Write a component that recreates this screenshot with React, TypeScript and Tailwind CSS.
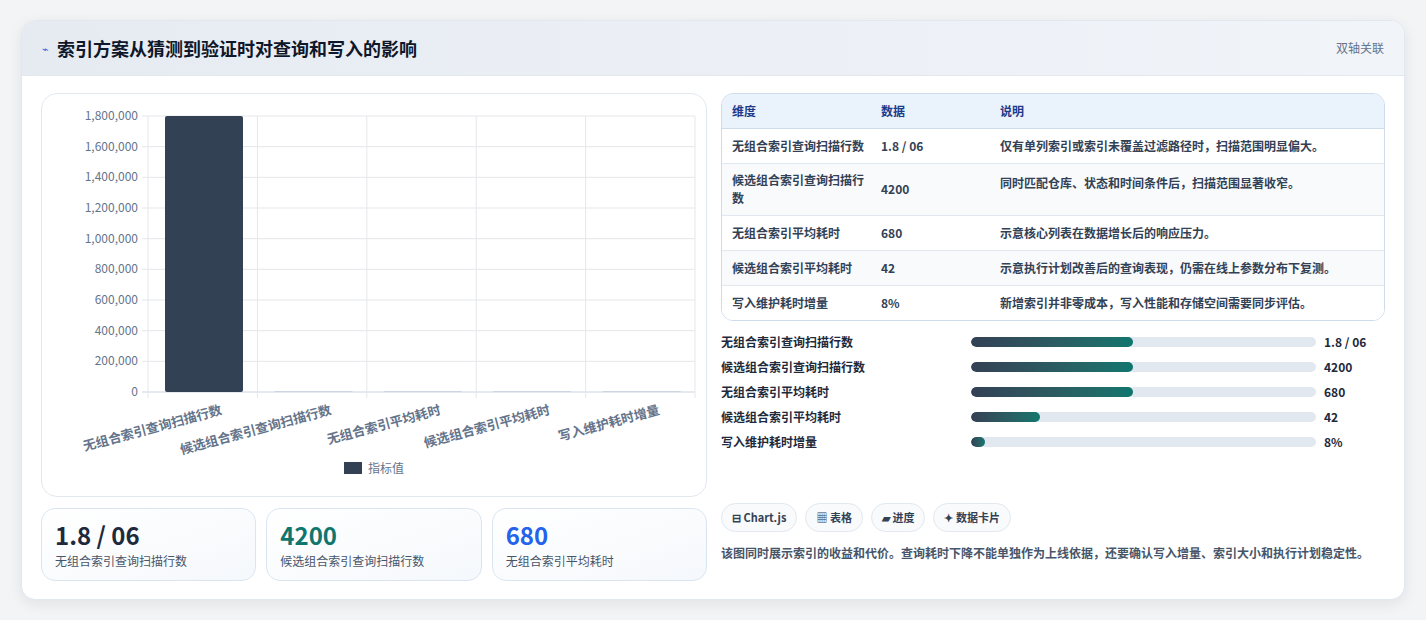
import React from 'react';

const FONT = { fontFamily: '"Noto Sans CJK SC", "Noto Sans", sans-serif' };

const rows = [
  { k: '无组合索引查询扫描行数', v: '1.8 / 06', d: '仅有单列索引或索引未覆盖过滤路径时，扫描范围明显偏大。' },
  { k: '候选组合索引查询扫描行数', v: '4200', d: '同时匹配仓库、状态和时间条件后，扫描范围显著收窄。' },
  { k: '无组合索引平均耗时', v: '680', d: '示意核心列表在数据增长后的响应压力。' },
  { k: '候选组合索引平均耗时', v: '42', d: '示意执行计划改善后的查询表现，仍需在线上参数分布下复测。' },
  { k: '写入维护耗时增量', v: '8%', d: '新增索引并非零成本，写入性能和存储空间需要同步评估。' },
];

const progress = [
  { k: '无组合索引查询扫描行数', v: '1.8 / 06', w: 47 },
  { k: '候选组合索引查询扫描行数', v: '4200', w: 47 },
  { k: '无组合索引平均耗时', v: '680', w: 47 },
  { k: '候选组合索引平均耗时', v: '42', w: 20 },
  { k: '写入维护耗时增量', v: '8%', w: 4 },
];

const ticks = ['1,800,000', '1,600,000', '1,400,000', '1,200,000', '1,000,000', '800,000', '600,000', '400,000', '200,000', '0'];
const cats = ['无组合索引查询扫描行数', '候选组合索引查询扫描行数', '无组合索引平均耗时', '候选组合索引平均耗时', '写入维护耗时增量'];

function Chart() {
  const x0 = 106, x1 = 653, y0 = 22, y1 = 298;
  const cw = (x1 - x0) / 5;
  const step = (y1 - y0) / 9;
  return (
    <svg width="664" height="400" style={FONT}>
      {ticks.map((t, i) => (
        <g key={t}>
          <line x1={x0 - 6} x2={x1} y1={y0 + i * step} y2={y0 + i * step} stroke={i === 9 ? '#cbd5e1' : '#e5e7eb'} />
          <text x={x0 - 10} y={y0 + i * step + 4} textAnchor="end" fontSize="12" fill="#64748b">{t}</text>
        </g>
      ))}
      {[0, 1, 2, 3, 4, 5].map(i => (
        <line key={i} x1={x0 + i * cw} x2={x0 + i * cw} y1={y0} y2={y1 + 6} stroke="#e5e7eb" />
      ))}
      <rect x={x0 + 17} y={y0} width={78} height={y1 - y0} rx="2" fill="#334155" />
      {[1, 2, 3, 4].map(i => (
        <rect key={i} x={x0 + i * cw + 17} y={y1 - 1} width={78} height={1} fill="#cbd5e1" />
      ))}
      {cats.map((c, i) => (
        <text key={c} x={x0 + i * cw + cw / 2 + 20} y={y1 + 22} textAnchor="end" fontSize="13" fontWeight="600" fill="#64748b"
          transform={`rotate(-15 ${x0 + i * cw + cw / 2 + 20} ${y1 + 22})`}>{c}</text>
      ))}
      <rect x={302} y={368} width={18} height={12} fill="#334155" />
      <text x={326} y={379} fontSize="12" fill="#64748b">指标值</text>
    </svg>
  );
}

export default function App() {
  return (
    <div className="min-h-screen bg-[#f3f4f6] px-[21px] pt-[20px]" style={FONT}>
      <div className="w-[1384px] h-[580px] bg-white rounded-[14px] border border-[#e2e8f0] shadow-[0_4px_14px_rgba(15,23,42,0.08)] overflow-hidden">
        <div className="h-[55px] flex items-center justify-between px-[20px] bg-gradient-to-r from-[#e6ebf2] to-[#f1f4f9] border-b border-[#e2e8f0]">
          <div className="flex items-center gap-[8px]">
            <span className="text-[#3b5bdb] text-[11px]">⌁</span>
            <span className="text-[18px] font-bold text-[#0f172a]">索引方案从猜测到验证时对查询和写入的影响</span>
          </div>
          <span className="text-[12px] text-[#64748b]">双轴关联</span>
        </div>
        <div className="flex gap-[14px] px-[19px] pt-[17px]">
          <div className="w-[666px] flex flex-col gap-[11px]">
            <div className="h-[404px] rounded-[16px] border border-[#e2e8f0] overflow-hidden">
              <Chart />
            </div>
            <div className="grid grid-cols-3 gap-[10px]">
              {[['1.8 / 06', '无组合索引查询扫描行数', 'text-[#1e293b]'], ['4200', '候选组合索引查询扫描行数', 'text-[#0f766e]'], ['680', '无组合索引平均耗时', 'text-[#2563eb]']].map(([v, l, c]) => (
                <div key={l} className="h-[73px] rounded-[14px] border border-[#dbe5f1] bg-gradient-to-br from-white to-[#f5f8fc] px-[13px] pt-[11px]">
                  <div className={`text-[24px] font-bold leading-[30px] ${c}`}>{v}</div>
                  <div className="text-[12px] text-[#475569] mt-[2px]">{l}</div>
                </div>
              ))}
            </div>
          </div>
          <div className="w-[667px] flex flex-col">
            <div className="rounded-[12px] border border-[#cfdcec] overflow-hidden">
              <table className="w-full text-[12px] text-[#334155] font-semibold">
                <thead>
                  <tr className="h-[34px] bg-[#eaf2fc] text-[#1e3a8a] border-b border-[#cfdcec] text-left">
                    <th className="pl-[10px] w-[159px] font-bold">维度</th>
                    <th className="w-[119px] font-bold">数据</th>
                    <th className="font-bold">说明</th>
                  </tr>
                </thead>
                <tbody>
                  {rows.map((r, i) => (
                    <tr key={r.k} className={`border-b border-[#e2e8f0] last:border-0 ${i === 1 ? 'h-[52px]' : 'h-[35px]'} ${i % 2 ? 'bg-[#f8fafc]' : 'bg-white'}`}>
                      <td className="pl-[10px] pr-[8px] leading-[18px]">{r.k}</td>
                      <td className="align-middle">{r.v}</td>
                      <td className={i === 1 ? 'align-top pt-[10px]' : ''}>{r.d}</td>
                    </tr>
                  ))}
                </tbody>
              </table>
            </div>
            <div className="mt-[12px] flex flex-col gap-[7px]">
              {progress.map(p => (
                <div key={p.k} className="flex items-center h-[18px] text-[12px] font-semibold text-[#1e293b]">
                  <span className="w-[250px]">{p.k}</span>
                  <div className="w-[345px] h-[10px] rounded-full bg-[#e2e8f0] overflow-hidden">
                    <div className="h-full rounded-full bg-gradient-to-r from-[#334155] to-[#0f766e]" style={{ width: `${p.w}%` }} />
                  </div>
                  <span className="ml-[8px] font-bold">{p.v}</span>
                </div>
              ))}
            </div>
            <div className="mt-[52px] flex gap-[8px]">
              {['⊟ Chart.js', '▦ 表格', '▰ 进度', '✦ 数据卡片'].map(t => (
                <span key={t} className="h-[29px] px-[10px] flex items-center rounded-full border border-[#e2e8f0] bg-[#f8fafc] text-[11px] font-semibold text-[#334155]">{t}</span>
              ))}
            </div>
            <p className="mt-[10px] text-[12px] leading-[22px] text-[#475569] font-semibold">该图同时展示索引的收益和代价。查询耗时下降不能单独作为上线依据，还要确认写入增量、索引大小和执行计划稳定性。</p>
          </div>
        </div>
      </div>
    </div>
  );
}
